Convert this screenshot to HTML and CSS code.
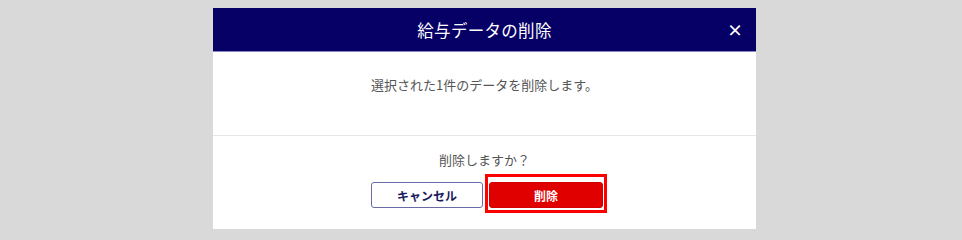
FILE: index.html
```html
<!DOCTYPE html>
<html lang="ja">
<head>
<meta charset="utf-8">
<link rel="stylesheet" href="styles.css">
</head>
<body>
<div class="modal">
  <div class="modal-header">
    <span class="modal-title">給与データの削除</span>
    <span class="modal-close">×</span>
  </div>
  <div class="modal-body">
    <p class="message">選択された1件のデータを削除します。</p>
  </div>
  <div class="modal-footer">
    <p class="confirm">削除しますか？</p>
    <div class="actions">
      <button class="btn btn-cancel">キャンセル</button>
      <span class="focus-ring"><button class="btn btn-delete">削除</button></span>
    </div>
  </div>
</div>
</body>
</html>
```
FILE: styles.css
```css
html, body {
  margin: 0;
  padding: 0;
  background: #d9d9d9;
  font-family: "Noto Sans CJK JP", "Noto Sans", sans-serif;
}
body {
  height: 235px;
  overflow: hidden;
}
.modal {
  width: 543px;
  margin: 8px 0 0 213px;
  background: #ffffff;
}
.modal-header {
  position: relative;
  height: 43px;
  background: #060066;
  border-bottom: 1px solid #8a88c4;
  display: flex;
  align-items: center;
  justify-content: center;
}
.modal-title {
  color: #ffffff;
  font-size: 16.5px;
  line-height: 20px;
  letter-spacing: 0.3px;
}
.modal-close {
  position: absolute;
  right: 13px;
  top: 10px;
  color: #ffffff;
  font-size: 16px;
  font-weight: bold;
  line-height: 22px;
}
.modal-body {
  padding: 23px 0 40px;
  border-bottom: 1px solid #e6e6e6;
}
.message {
  margin: 0;
  text-align: center;
  color: #555555;
  font-size: 13px;
  line-height: 20px;
}
.modal-footer {
  padding: 14px 0 16px;
}
.confirm {
  margin: 0 0 4px;
  text-align: center;
  color: #555555;
  font-size: 13px;
  line-height: 20px;
}
.actions {
  display: flex;
  justify-content: center;
  align-items: flex-start;
  gap: 2px;
  padding-left: 9px;
}
.btn {
  font-family: "Noto Sans CJK JP", "Noto Sans", sans-serif;
  font-size: 12px;
  font-weight: bold;
  height: 26px;
  border-radius: 3px;
  padding: 0;
  margin: 0;
  cursor: pointer;
}
.btn-cancel {
  width: 112px;
  margin-top: 8px;
  background: #ffffff;
  border: 1px solid #6b6aa8;
  color: #1b1a5c;
}
.focus-ring {
  display: block;
  border: 3px solid #ff0000;
  padding: 5px 1px 2px 1px;
}
.btn-delete {
  display: block;
  width: 114px;
  background: #e00000;
  border: 1px solid #d00000;
  color: #ffffff;
}
```
